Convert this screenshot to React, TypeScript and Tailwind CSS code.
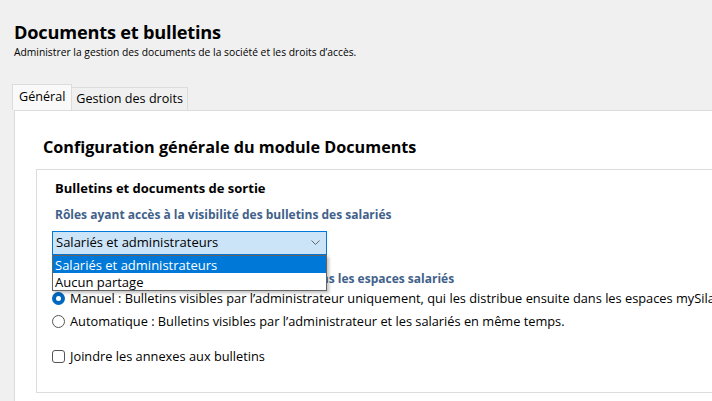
import React from "react";

const font = "font-['Open_Sans','Noto_Sans',sans-serif]";

function Radio({ checked }: { checked?: boolean }) {
  return checked ? (
    <span className="w-[13px] h-[13px] rounded-full bg-[#0067c0] flex items-center justify-center shrink-0">
      <span className="w-[5px] h-[5px] rounded-full bg-white" />
    </span>
  ) : (
    <span className="w-[13px] h-[13px] rounded-full border border-[#555] bg-white shrink-0" />
  );
}

export default function App() {
  return (
    <div className={`w-[712px] h-[401px] overflow-hidden bg-[#f0f0f0] text-black ${font}`}>
      {/* Header */}
      <div className="pl-[14px] pt-[19px]">
        <h1 className="text-[18.2px] leading-[26px] font-bold tracking-[-0.2px]">Documents et bulletins</h1>
        <p className="text-[10.3px] leading-[14px]">
          Administrer la gestion des documents de la société et les droits d’accès.
        </p>
      </div>

      {/* Tabs */}
      <div className="mt-[25px] pl-[12px] flex items-end h-[26px]">
        <div className="h-[26px] px-[6px] bg-[#f9f9f9] border border-b-0 border-[#dcdcdc] text-[12.6px] leading-[24px]">
          Général
        </div>
        <div className="h-[23px] px-[4px] bg-[#f0f0f0] border border-l-0 border-b-0 border-[#dcdcdc] text-[12.6px] leading-[22px]">
          Gestion des droits
        </div>
      </div>

      {/* Panel */}
      <div className="ml-[14px] bg-white border-t border-l border-[#dcdcdc] h-[300px] pl-[21px]">
        <h2 className="ml-[7px] pt-[25px] text-[16.2px] leading-[22px] font-bold">
          Configuration générale du module Documents
        </h2>
        <div className="mt-[11px] border-t border-l border-b border-[#dcdcdc] h-[224px] pl-[15px] pt-[8px]">
          <h3 className="ml-[3px] text-[13px] leading-[20px] font-bold">Bulletins et documents de sortie</h3>
          <p className="ml-[3px] mt-[8px] text-[12px] leading-[18px] font-bold text-[#41618a]">
            Rôles ayant accès à la visibilité des bulletins des salariés
          </p>

          <div className="relative mt-[7px] w-[275px]">
            <div className="h-[24px] bg-[#cce4f7] border border-[#0078d7] flex items-center justify-between pl-[3px] pr-[6px] text-[13px]">
              <span>Salariés et administrateurs</span>
              <svg width="9" height="6" viewBox="0 0 9 6" fill="none">
                <path d="M0.5 0.5 L4.5 4.5 L8.5 0.5" stroke="#666" strokeWidth="1" />
              </svg>
            </div>
            <div className="absolute left-0 top-[24px] w-[275px] z-10 bg-white border border-[#646464] shadow-[2px_2px_3px_rgba(0,0,0,0.25)] text-[13px]">
              <div className="h-[17px] leading-[18px] bg-[#0078d7] text-white pl-[2px]">Salariés et administrateurs</div>
              <div className="h-[17px] leading-[18px] pl-[2px]">Aucun partage</div>
            </div>
          </div>

          <p className="ml-[3px] mt-[15px] text-[12px] leading-[18px] font-bold text-[#41618a] whitespace-nowrap">
            Modes de mise à disposition des bulletins dans les espaces salariés
          </p>

          <div className="mt-[1px] flex flex-col gap-[4px] text-[12.8px] leading-[19px]">
            <label className="flex items-center gap-[5px] whitespace-nowrap">
              <Radio checked />
              <span>Manuel : Bulletins visibles par l’administrateur uniquement, qui les distribue ensuite dans les espaces mySilae</span>
            </label>
            <label className="flex items-center gap-[5px] whitespace-nowrap">
              <Radio />
              <span>Automatique : Bulletins visibles par l’administrateur et les salariés en même temps.</span>
            </label>
          </div>

          <label className="mt-[16px] flex items-center gap-[5px] text-[12.8px] leading-[19px]">
            <span className="w-[13px] h-[13px] rounded-[3px] border border-[#555] bg-white shrink-0" />
            <span>Joindre les annexes aux bulletins</span>
          </label>
        </div>
      </div>
    </div>
  );
}
